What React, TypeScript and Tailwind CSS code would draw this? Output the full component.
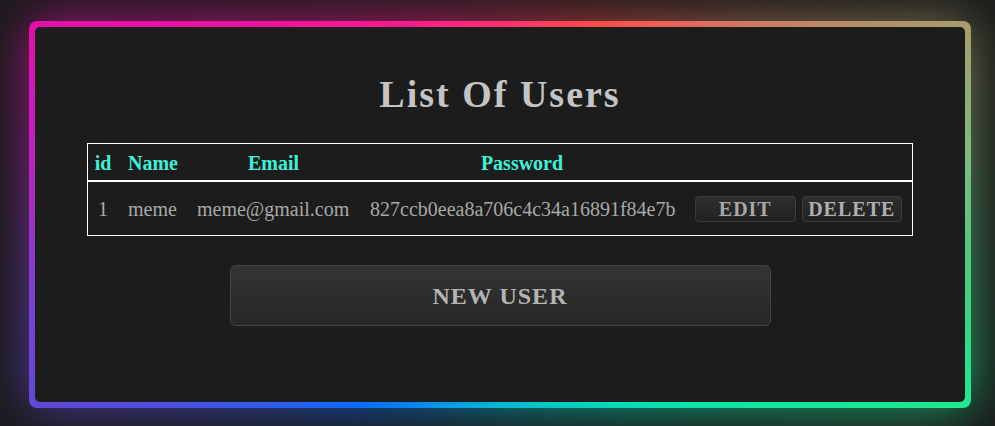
import React from "react";

const users = [
  { id: 1, name: "meme", email: "meme@gmail.com", password: "827ccb0eea8a706c4c34a16891f84e7b" },
];

export default function App() {
  return (
    <div className="w-[995px] h-[426px] overflow-hidden bg-[#1a1a1a] pl-[29px] pt-[21px] font-['Liberation_Serif','Times_New_Roman',serif]">
      <div className="relative w-[942px] h-[387px]">
        {/* glow behind the border */}
        <div className="absolute inset-0 rounded-lg blur-[26px] opacity-70 bg-[image:conic-gradient(from_0deg_at_50%_50%,#ff3070_0deg,#ff4a4a_27deg,#e06a5a_46deg,#a89a6a_67deg,#80b880_82deg,#40d080_100deg,#20e890_112deg,#00e0b0_142deg,#00b8d0_180deg,#0a6aff_218deg,#6048d8_247deg,#8040d0_262deg,#c020c0_278deg,#e010a8_292deg,#ff1a8c_333deg,#ff3070_360deg)]" />

        {/* gradient border */}
        <div className="relative h-full rounded-lg p-[6px] bg-[image:conic-gradient(from_0deg_at_50%_50%,#ff3070_0deg,#ff4a4a_27deg,#e06a5a_46deg,#a89a6a_67deg,#80b880_82deg,#40d080_100deg,#20e890_112deg,#00e0b0_142deg,#00b8d0_180deg,#0a6aff_218deg,#6048d8_247deg,#8040d0_262deg,#c020c0_278deg,#e010a8_292deg,#ff1a8c_333deg,#ff3070_360deg)]">
          <div className="h-full rounded-[5px] bg-[#1c1c1c] flex flex-col items-center pt-[48px]">
            <h1 className="text-[38px] leading-none font-bold tracking-[2px] text-[#c4c4c4]">List Of Users</h1>

            {/* users table */}
            <div className="mt-[30px] w-[826px] border border-white">
              <table className="w-full table-fixed border-separate border-spacing-0 text-[20px]">
                <colgroup>
                  <col className="w-[30px]" />
                  <col className="w-[69px]" />
                  <col className="w-[173px]" />
                  <col className="w-[324px]" />
                  <col className="w-[228px]" />
                </colgroup>
                <thead>
                  <tr className="text-[#3ff0d6] font-bold">
                    <th className="h-[38px] px-[6px] pt-[2px] pb-0 border-b-2 border-white text-center">id</th>
                    <th className="h-[38px] px-[10px] pt-[2px] pb-0 border-b-2 border-white text-center">Name</th>
                    <th className="h-[38px] px-[10px] pt-[2px] pb-0 border-b-2 border-white text-center">Email</th>
                    <th className="h-[38px] px-[10px] pt-[2px] pb-0 border-b-2 border-white text-center">Password</th>
                    <th className="h-[38px] px-[10px] py-0 border-b-2 border-white"></th>
                  </tr>
                </thead>
                <tbody>
                  {users.map((u) => (
                    <tr key={u.id} className="text-[#a8a8a8]">
                      <td className="h-[53px] px-[10px] py-0">{u.id}</td>
                      <td className="h-[53px] px-[10px] py-0">{u.name}</td>
                      <td className="h-[53px] px-[10px] py-0">{u.email}</td>
                      <td className="h-[53px] px-[10px] py-0">{u.password}</td>
                      <td className="h-[53px] pl-[11px] pr-[10px] py-0">
                        <div className="flex gap-[6px]">
                          <button className="w-[101px] h-[26px] rounded-[4px] border border-[#3c3c3c] bg-gradient-to-b from-[#2e2e2e] to-[#222222] text-[20px] leading-none font-bold tracking-[1px] text-[#a8a8a8]">
                            EDIT
                          </button>
                          <button className="w-[101px] h-[26px] rounded-[4px] border border-[#3c3c3c] bg-gradient-to-b from-[#2e2e2e] to-[#222222] text-[20px] leading-none font-bold tracking-[1px] text-[#b0b0b0]">
                            DELETE
                          </button>
                        </div>
                      </td>
                    </tr>
                  ))}
                </tbody>
              </table>
            </div>

            <button className="mt-[29px] w-[541px] h-[61px] rounded-md border border-[#444444] bg-gradient-to-b from-[#333333] to-[#262626] text-[24px] font-bold tracking-[1px] text-[#b4b4b4]">
              NEW USER
            </button>
          </div>
        </div>
      </div>
    </div>
  );
}
